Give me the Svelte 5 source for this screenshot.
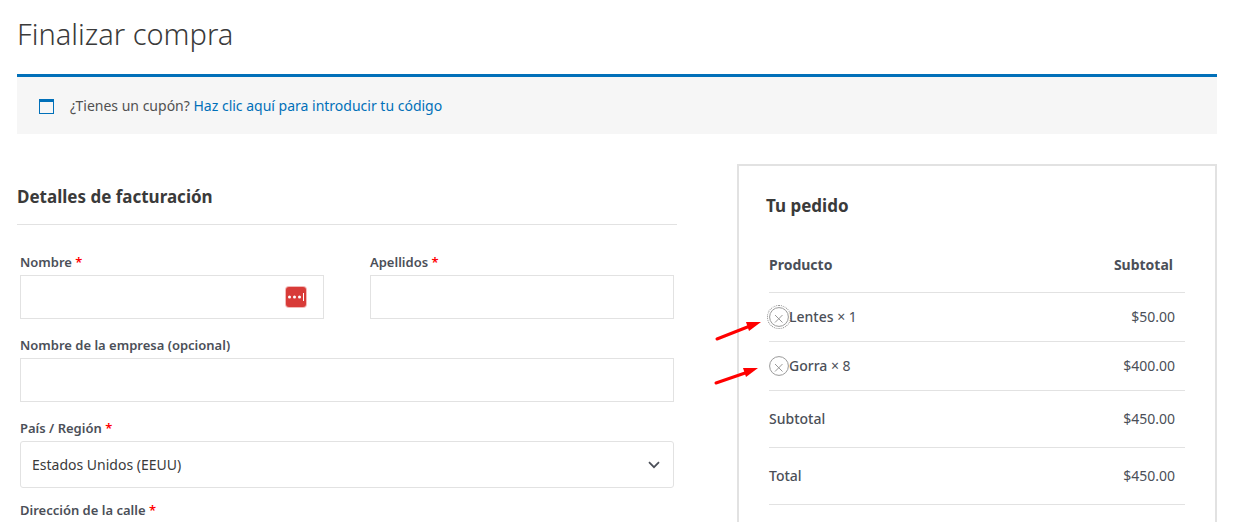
<script>
  let items = $state([
    { id: 1, name: 'Lentes', quantity: 1, price: 50 },
    { id: 2, name: 'Gorra', quantity: 8, price: 50 },
  ]);
  const total = $derived(items.reduce((sum, i) => sum + i.quantity * i.price, 0));
  const money = (n) => '$' + n.toFixed(2);

  // Pointer shapes drawn next to each remove button
  const pointers = [
    { line: 'M3 25 L36 12', head: '47,8 35,17 32,8' },
    { line: 'M2 20 L34 9', head: '44,5 32,14 29,5' },
  ];

  function remove(id) {
    items = items.filter((i) => i.id !== id);
  }
</script>

<main class="page">
  <h1>Finalizar compra</h1>

  <div class="notice">
    <svg class="notice-icon" viewBox="0 0 15 15" aria-hidden="true">
      <path fill="#0170b9" fill-rule="evenodd" d="M0 0h15v15H0zM1 3v11h13V3z" />
    </svg>
    <p>¿Tienes un cupón? <a href="#cupon">Haz clic aquí para introducir tu código</a></p>
  </div>

  <div class="columns">
    <form class="billing">
      <h2>Detalles de facturación</h2>
      <div class="fields">
        <div class="pair">
          <div class="field">
            <label for="first-name">Nombre <span class="required">*</span></label>
            <div class="control">
              <input id="first-name" type="text" />
              <svg class="manager" viewBox="0 0 22 22" aria-hidden="true">
                <rect width="22" height="22" rx="4" fill="#f3b9b8" />
                <rect x="1" y="1" width="20" height="20" rx="3" fill="#d83b38" />
                <circle cx="4.5" cy="11" r="1.5" fill="#fff" />
                <circle cx="9.5" cy="11" r="1.5" fill="#fff" />
                <circle cx="14.5" cy="11" r="1.5" fill="#fff" />
                <rect x="18" y="7" width="1" height="8" fill="#fff" />
              </svg>
            </div>
          </div>
          <div class="field">
            <label for="last-name">Apellidos <span class="required">*</span></label>
            <input id="last-name" type="text" />
          </div>
        </div>
        <div class="field">
          <label for="company">Nombre de la empresa (opcional)</label>
          <input id="company" type="text" />
        </div>
        <div class="field">
          <label for="country">País / Región <span class="required">*</span></label>
          <div class="control">
            <select id="country">
              <option>Estados Unidos (EEUU)</option>
            </select>
            <svg class="chevron" viewBox="0 0 12 8" aria-hidden="true">
              <path d="M1 1.2 6 6.2 11 1.2" fill="none" stroke="#4b4f58" stroke-width="1.7" />
            </svg>
          </div>
        </div>
        <div class="field">
          <label for="street">Dirección de la calle <span class="required">*</span></label>
          <input id="street" type="text" />
        </div>
      </div>
    </form>

    <section class="order">
      <h2>Tu pedido</h2>
      <table>
        <thead>
          <tr><th scope="col">Producto</th><th scope="col">Subtotal</th></tr>
        </thead>
        <tbody>
          {#each items as item, index (item.id)}
            <tr>
              <td class="product">
                <svg class="pointer" viewBox="0 0 50 30" aria-hidden="true">
                  <path d={pointers[index].line} stroke="#f00" stroke-width="3" stroke-linecap="round" />
                  <polygon points={pointers[index].head} fill="#f00" />
                </svg>
                <div class="line">
                  <button class:focused={index === 0} type="button" aria-label="×" onclick={() => remove(item.id)}>
                    <svg viewBox="0 0 20 20" aria-hidden="true">
                      <circle cx="10" cy="10" r="9.4" />
                      <path d="M6 8 13.5 15.5M13.5 8 6 15.5" />
                    </svg>
                  </button>
                  <span><b>{item.name}</b>&nbsp;× {item.quantity}</span>
                </div>
              </td>
              <td>{money(item.quantity * item.price)}</td>
            </tr>
          {/each}
        </tbody>
        <tfoot>
          <tr><th scope="row">Subtotal</th><td>{money(total)}</td></tr>
          <tr><th scope="row">Total</th><td>{money(total)}</td></tr>
        </tfoot>
      </table>
    </section>
  </div>
</main>

<style>
  :global(body) {
    margin: 0;
    background: #fff;
  }
  .page {
    box-sizing: border-box;
    height: 100vh;
    overflow: hidden;
    padding: 12px 24px 0 17px;
    color: #4b4f58;
    font: 14px/24px 'Noto Sans', 'Open Sans', sans-serif;
  }
  h1 {
    margin: 0 0 18px;
    color: #3a3a3a;
    font-size: 29px;
    font-weight: 300;
    line-height: 44px;
  }
  h2 {
    margin: 0;
    color: #3a3a3a;
    font-size: 17px;
    font-weight: 700;
    line-height: 24px;
  }
  .notice {
    display: flex;
    align-items: center;
    gap: 16px;
    padding: 17px 22px 16px;
    border-top: 3px solid #0170b9;
    background: #f6f6f6;
    color: #515151;
  }
  .notice p {
    margin: 0;
  }
  .notice a {
    color: #0170b9;
    text-decoration: none;
  }
  .notice-icon {
    width: 15px;
    height: 15px;
  }
  .columns {
    display: grid;
    grid-template-columns: 11fr 8fr;
    gap: 60px;
    margin-top: 30px;
  }
  .billing h2 {
    padding: 21px 0 15px;
    border-bottom: 1px solid #e2e2e2;
  }
  .fields {
    padding: 27px 3px 0;
  }
  .pair {
    display: grid;
    grid-template-columns: 1fr 1fr;
    gap: 46px;
  }
  label {
    display: block;
    margin-bottom: 3px;
    font-size: 13px;
    font-weight: 600;
    line-height: 20px;
  }
  .required {
    color: #f00;
  }
  .control {
    position: relative;
  }
  input,
  select {
    display: block;
    box-sizing: border-box;
    width: 100%;
    height: 44px;
    margin-bottom: 16px;
    padding: 0 11px;
    border: 1px solid #e2e2e2;
    border-radius: 0;
    outline: 0;
    background: #fff;
    color: #3a3a3a;
    font: inherit;
  }
  select {
    height: 47px;
    margin-bottom: 12px;
    border-radius: 3px;
    appearance: none;
  }
  .manager {
    position: absolute;
    top: 11px;
    right: 17px;
    width: 22px;
    height: 22px;
  }
  .chevron {
    position: absolute;
    top: 20px;
    right: 14px;
    width: 12px;
    height: 8px;
  }
  .order {
    padding: 28px 30px 28px 27px;
    border: 2px solid #e2e2e2;
  }
  table {
    width: calc(100% - 3px);
    margin: 20px 0 0 3px;
    border-spacing: 0;
  }
  th,
  td {
    padding: 12px 0;
    border-bottom: 1px solid #e2e2e2;
    font-weight: 400;
    text-align: left;
  }
  th:last-child,
  td:last-child {
    padding-right: 10px;
    text-align: right;
  }
  thead th {
    padding: 15px 0;
    font-weight: 700;
  }
  thead th:last-child {
    padding-right: 12px;
  }
  tfoot th,
  tfoot td {
    padding: 16px 0;
  }
  tfoot th {
    font-weight: 500;
  }
  b {
    font-weight: 500;
  }
  .product {
    position: relative;
  }
  .line {
    display: flex;
    align-items: center;
  }
  .line button {
    width: 20px;
    height: 20px;
    padding: 0;
    border: 0;
    border-radius: 50%;
    background: none;
    cursor: pointer;
  }
  .line button.focused {
    outline: 1px dotted #8a8a8a;
    outline-offset: 1px;
  }
  .line button svg {
    display: block;
    fill: none;
    stroke: #999;
  }
  .pointer {
    position: absolute;
    top: 21px;
    left: -55px;
    width: 50px;
    height: 30px;
  }
</style>
